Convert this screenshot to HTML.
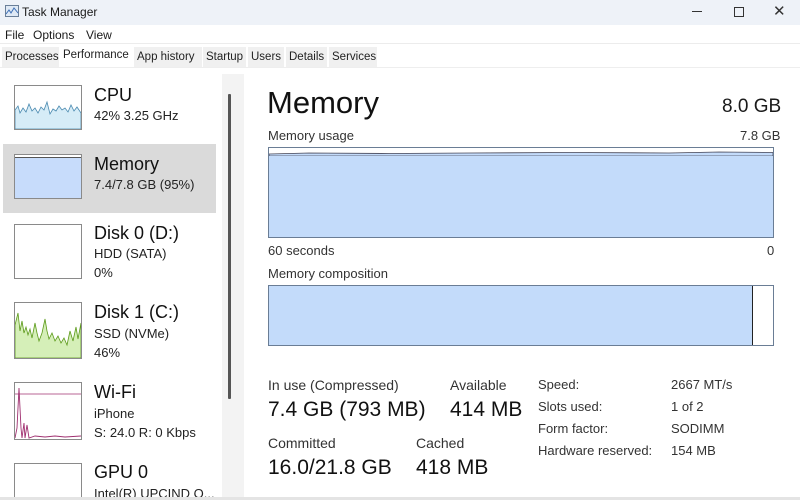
<!DOCTYPE html>
<html style="width:800px;height:500px;overflow:hidden"><head><meta charset="utf-8"><style>
*{margin:0;padding:0;box-sizing:border-box}
body{width:800px;height:500px;overflow:hidden;background:#fff;font-family:"Liberation Sans",sans-serif;color:#1a1a1a;position:relative}
.a{position:absolute;white-space:nowrap}
.tb{position:absolute;left:0;top:0;width:800px;height:25px;background:#eef2f8}
.tab{position:absolute;top:47px;height:20px;font-size:11.5px;line-height:20px;padding:0 3px;background:#f0f0f0;color:#222}
.th{position:absolute;left:14px;width:68px;border:1px solid #8a8a8a}
.n{font-size:18px;color:#111}
.s{font-size:13px;color:#222}
.l{font-size:13px;color:#333}
.v{font-size:21px;color:#111}
</style></head><body>
<div class="tb"></div>
<svg class="a" style="left:5px;top:5px" width="14" height="12"><rect x="0.5" y="0.5" width="13" height="11" fill="#dfe9f5" stroke="#6a7f99"/><polyline points="1,9 4,5 6,8 9,3 13,8" fill="none" stroke="#3d6fb6" stroke-width="1"/></svg>
<div class="a" style="left:22px;top:5px;font-size:12px">Task Manager</div>
<div class="a" style="left:692px;top:11px;width:10px;height:1px;background:#333"></div>
<div class="a" style="left:734px;top:7px;width:10px;height:10px;border:1px solid #333"></div>
<div class="a" style="left:773px;top:2px;font-size:15px;color:#333">✕</div>
<div class="a" style="left:5px;top:28px;font-size:12px">File</div>
<div class="a" style="left:33px;top:28px;font-size:12px">Options</div>
<div class="a" style="left:86px;top:28px;font-size:12px">View</div>
<div class="a" style="left:0;top:43px;width:800px;height:1px;background:#ececec"></div>
<div class="tab" style="left:2px;width:57px">Processes</div>
<div class="tab" style="left:60px;top:45px;width:73px;background:#fff">Performance</div>
<div class="tab" style="left:134px;width:68px">App history</div>
<div class="tab" style="left:203px;width:43px">Startup</div>
<div class="tab" style="left:248px;width:36px">Users</div>
<div class="tab" style="left:286px;width:41px">Details</div>
<div class="tab" style="left:329px;width:48px">Services</div>
<div class="a" style="left:0;top:67px;width:800px;height:1px;background:#eee"></div>
<div class="a" style="left:222px;top:74px;width:22px;height:426px;background:#f3f3f3"></div>
<div class="a" style="left:228px;top:94px;width:3px;height:305px;background:#555;border-radius:1px"></div>
<div class="a" style="left:3px;top:144px;width:213px;height:69px;background:#dadada"></div>

<div class="th" style="top:85px;height:45px;background:#fff"><svg width="66" height="43" style="display:block"><path d="M0,24 L3,20 5,27 8,22 11,26 14,18 17,25 20,22 23,27 26,21 29,24 32,16 35,28 38,23 41,25 44,20 47,24 50,22 53,26 56,19 59,25 62,21 66,27 L66,43 L0,43Z" fill="#d6ecf7" stroke="#4a8ab0" stroke-width="0.8"/></svg></div>
<div class="a n" style="left:94px;top:85px">CPU</div>
<div class="a s" style="left:94px;top:108px">42% 3.25 GHz</div>

<div class="th" style="top:154px;height:45px;background:#c7dcfb"><div style="height:3px;border-bottom:1px solid #555;background:#fff"></div></div>
<div class="a n" style="left:94px;top:154px">Memory</div>
<div class="a s" style="left:94px;top:177px">7.4/7.8 GB (95%)</div>

<div class="th" style="top:224px;height:55px;background:#fff"></div>
<div class="a n" style="left:94px;top:223px">Disk 0 (D:)</div>
<div class="a s" style="left:94px;top:246px">HDD (SATA)</div>
<div class="a s" style="left:94px;top:265px">0%</div>

<div class="th" style="top:302px;height:57px;background:#fff"><svg width="66" height="55" style="display:block"><path d="M0,22 L3,10 5,28 7,18 9,30 11,24 13,32 15,26 17,35 20,20 22,30 24,38 27,30 30,16 32,28 34,36 37,30 40,38 43,33 46,40 49,35 52,42 55,28 58,38 61,24 63,36 66,20 L66,55 L0,55Z" fill="#d5efb8" stroke="#5c9a1a" stroke-width="0.8"/></svg></div>
<div class="a n" style="left:94px;top:302px">Disk 1 (C:)</div>
<div class="a s" style="left:94px;top:326px">SSD (NVMe)</div>
<div class="a s" style="left:94px;top:345px">46%</div>

<div class="th" style="top:382px;height:58px;background:#fff"><svg width="66" height="56" style="display:block"><line x1="0" y1="11" x2="66" y2="11" stroke="#a03070" stroke-width="0.8"/><path d="M0,55 L2,45 4,5 6,45 7,55 9,40 10,55 12,42 14,55 20,53 30,54 40,53 50,54 66,53" fill="none" stroke="#a03070" stroke-width="0.9"/></svg></div>
<div class="a n" style="left:94px;top:382px">Wi-Fi</div>
<div class="a s" style="left:94px;top:406px">iPhone</div>
<div class="a s" style="left:94px;top:425px">S: 24.0 R: 0 Kbps</div>

<div class="th" style="top:463px;height:37px;background:#fff;border-bottom:none"></div>
<div class="a n" style="left:94px;top:462px">GPU 0</div>
<div class="a s" style="left:94px;top:486px;height:11px;overflow:hidden">Intel(R) UPCIND O...</div>

<div class="a" style="left:267px;top:85px;font-size:31px;color:#111">Memory</div>
<div class="a" style="left:722px;top:96px;font-size:19px">8.0 GB</div>
<div class="a l" style="left:268px;top:128px">Memory usage</div>
<div class="a l" style="left:740px;top:128px">7.8 GB</div>
<div class="a" style="left:268px;top:147px;width:506px;height:91px;border:1px solid #6a7d95;background:#c3dbfa">
<svg width="504" height="8" style="display:block;background:#fff"><path d="M0,6 L40,5 120,5.5 200,5 300,4.5 400,5 450,4 504,4.5 L504,8 L0,8Z" fill="#c3dbfa" stroke="#445" stroke-width="0.8"/></svg></div>
<div class="a l" style="left:268px;top:243px">60 seconds</div>
<div class="a l" style="left:767px;top:243px">0</div>
<div class="a l" style="left:268px;top:266px">Memory composition</div>
<div class="a" style="left:268px;top:285px;width:506px;height:61px;border:1px solid #6a7d95;background:#fff"><div style="width:484px;height:59px;background:#c3dbfa;border-right:1px solid #222"></div></div>

<div class="a l" style="left:268px;top:377px;font-size:14px">In use (Compressed)</div>
<div class="a v" style="left:268px;top:398px">7.4 GB (793 MB)</div>
<div class="a l" style="left:450px;top:377px;font-size:14px">Available</div>
<div class="a v" style="left:450px;top:398px">414 MB</div>
<div class="a l" style="left:268px;top:435px;font-size:14px">Committed</div>
<div class="a v" style="left:268px;top:456px">16.0/21.8 GB</div>
<div class="a l" style="left:416px;top:435px;font-size:14px">Cached</div>
<div class="a v" style="left:416px;top:456px">418 MB</div>

<div class="a l" style="left:538px;top:377px">Speed:</div><div class="a l" style="left:671px;top:377px">2667 MT/s</div>
<div class="a l" style="left:538px;top:399px">Slots used:</div><div class="a l" style="left:671px;top:399px">1 of 2</div>
<div class="a l" style="left:538px;top:421px">Form factor:</div><div class="a l" style="left:671px;top:421px">SODIMM</div>
<div class="a l" style="left:538px;top:443px">Hardware reserved:</div><div class="a l" style="left:671px;top:443px">154 MB</div>
<div class="a" style="left:0;top:497px;width:800px;height:3px;background:#e4e4e4"></div>
</body></html>
